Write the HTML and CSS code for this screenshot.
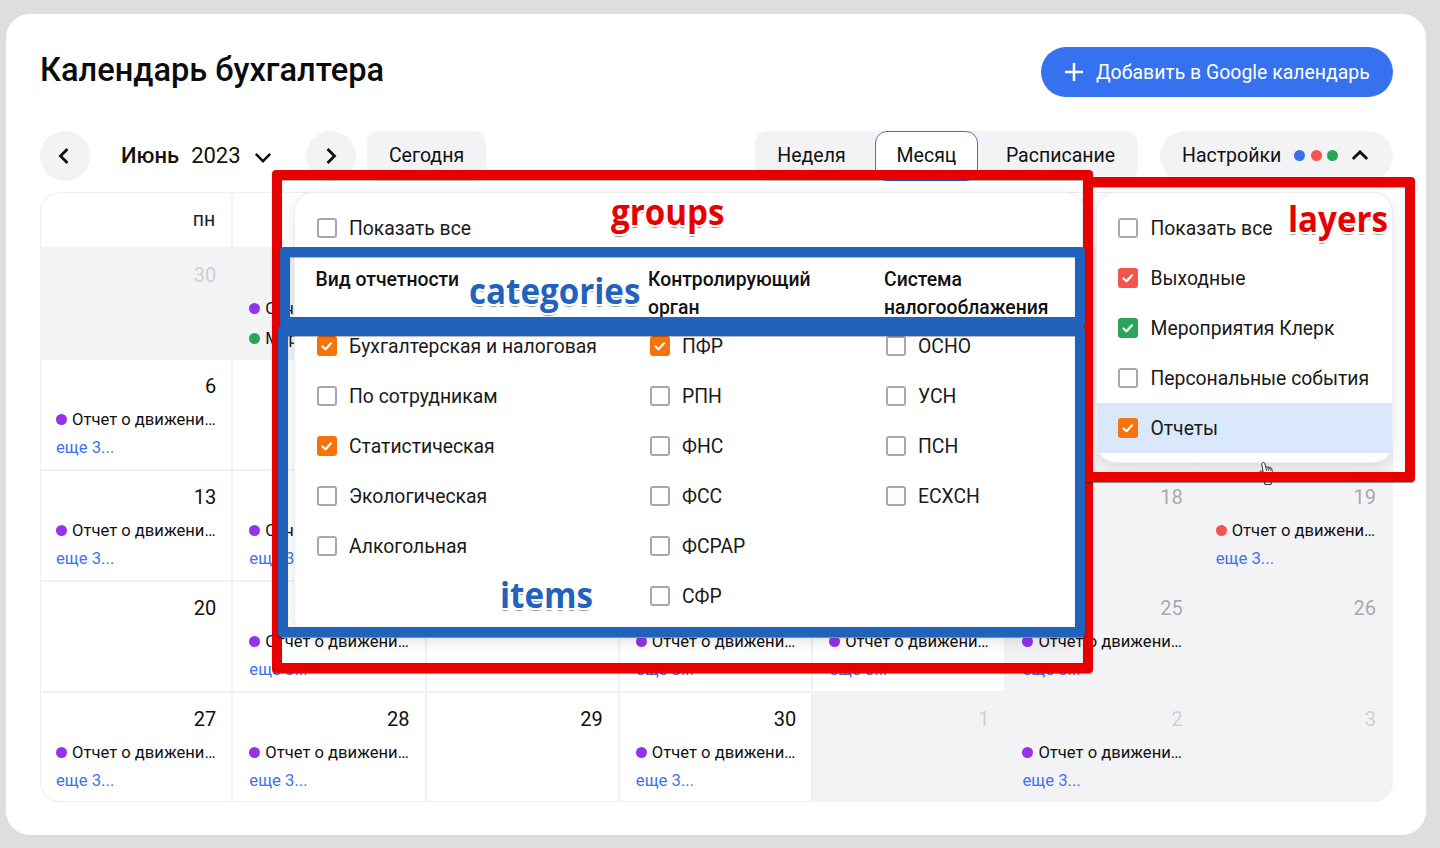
FILE: index.html
```html
<!DOCTYPE html>
<html lang="ru">
<head>
<meta charset="utf-8">
<title>Календарь бухгалтера</title>
<link rel="stylesheet" href="styles.css">
</head>
<body>
<svg class="defs" width="0" height="0" aria-hidden="true"><defs><symbol id="tick" viewBox="0 0 20 20"><path d="M5.500 10.500l3 2.800 5.500-6" fill="none" stroke="#fff" stroke-width="2.200" stroke-linecap="round" stroke-linejoin="round"/></symbol></defs></svg>
<main class="card">
  <header class="top">
    <h1 class="title">Календарь бухгалтера</h1>
    <button class="add"><svg class="plus" viewBox="0 0 20 20"><path d="M10 0v20M0 10h20" fill="none" stroke="#fff" stroke-width="2.800"/></svg><span class="add-text">Добавить в Google календарь</span></button>
  </header>
  <div class="controls">
    <button class="round"><svg class="chev chev-left" viewBox="0 0 14 20"><path d="M10.500 3L3.500 10l7 7" fill="none" stroke="#111" stroke-width="2.800"/></svg></button>
    <div class="month"><b>Июнь</b><span>2023</span><svg class="down" viewBox="0 0 20 12"><path d="M2 2l8 8 8-8" fill="none" stroke="#111" stroke-width="2.800"/></svg></div>
    <button class="round"><svg class="chev" viewBox="0 0 14 20"><path d="M3.500 3l7 7-7 7" fill="none" stroke="#111" stroke-width="2.800"/></svg></button>
    <button class="today">Сегодня</button>
    <div class="tabs"><span class="tab tab-week">Неделя</span><span class="tab tab-active">Месяц</span><span class="tab tab-sched">Расписание</span></div>
    <div class="settings">Настройки<i class="dot blue"></i><i class="dot red"></i><i class="dot green"></i><svg class="up" viewBox="0 0 20 12"><path d="M2 10l8-8 8 8" fill="none" stroke="#111" stroke-width="3.200"/></svg></div>
  </div>

  <div class="calendar-wrap">
    <div class="calendar">
      <div class="head">пн</div><div class="head">вт</div><div class="head">ср</div><div class="head">чт</div><div class="head">пт</div><div class="head">сб</div><div class="head">вс</div>

      <div class="cell out"><div class="num">30</div></div>
      <div class="cell out"><div class="num">31</div><div class="ev"><i class="pt purple"></i><span>Отчет о движении денежных средств</span></div><div class="ev"><i class="pt grn"></i><span>Мероприятие Клерк</span></div></div>
      <div class="cell"><div class="num">1</div></div>
      <div class="cell"><div class="num">2</div></div>
      <div class="cell"><div class="num">3</div></div>
      <div class="cell off"><div class="num">4</div></div>
      <div class="cell off"><div class="num">5</div></div>

      <div class="cell"><div class="num">6</div><div class="ev"><i class="pt purple"></i><span>Отчет о движении денежных средств</span></div><a class="more">еще 3...</a></div>
      <div class="cell"><div class="num">7</div></div>
      <div class="cell"><div class="num">8</div></div>
      <div class="cell"><div class="num">9</div></div>
      <div class="cell"><div class="num">10</div></div>
      <div class="cell off"><div class="num">11</div></div>
      <div class="cell off"><div class="num">12</div></div>

      <div class="cell"><div class="num">13</div><div class="ev"><i class="pt purple"></i><span>Отчет о движении денежных средств</span></div><a class="more">еще 3...</a></div>
      <div class="cell"><div class="num">14</div><div class="ev"><i class="pt purple"></i><span>Отчет о движении денежных средств</span></div><a class="more">еще 3...</a></div>
      <div class="cell"><div class="num">15</div></div>
      <div class="cell"><div class="num">16</div></div>
      <div class="cell"><div class="num">17</div></div>
      <div class="cell off"><div class="num">18</div></div>
      <div class="cell off"><div class="num">19</div><div class="ev"><i class="pt redpt"></i><span>Отчет о движении денежных средств</span></div><a class="more">еще 3...</a></div>

      <div class="cell"><div class="num">20</div></div>
      <div class="cell"><div class="num">21</div><div class="ev"><i class="pt purple"></i><span>Отчет о движении денежных средств</span></div><a class="more">еще 3...</a></div>
      <div class="cell"><div class="num">22</div></div>
      <div class="cell"><div class="num">23</div><div class="ev"><i class="pt purple"></i><span>Отчет о движении денежных средств</span></div><a class="more">еще 3...</a></div>
      <div class="cell"><div class="num">24</div><div class="ev"><i class="pt purple"></i><span>Отчет о движении денежных средств</span></div><a class="more">еще 3...</a></div>
      <div class="cell off"><div class="num">25</div><div class="ev"><i class="pt purple"></i><span>Отчет о движении денежных средств</span></div><a class="more">еще 3...</a></div>
      <div class="cell off"><div class="num">26</div></div>

      <div class="cell"><div class="num">27</div><div class="ev"><i class="pt purple"></i><span>Отчет о движении денежных средств</span></div><a class="more">еще 3...</a></div>
      <div class="cell"><div class="num">28</div><div class="ev"><i class="pt purple"></i><span>Отчет о движении денежных средств</span></div><a class="more">еще 3...</a></div>
      <div class="cell"><div class="num">29</div></div>
      <div class="cell"><div class="num">30</div><div class="ev"><i class="pt purple"></i><span>Отчет о движении денежных средств</span></div><a class="more">еще 3...</a></div>
      <div class="cell out"><div class="num">1</div></div>
      <div class="cell out"><div class="num">2</div><div class="ev"><i class="pt purple"></i><span>Отчет о движении денежных средств</span></div><a class="more">еще 3...</a></div>
      <div class="cell out"><div class="num">3</div></div>
    </div>

    <section class="panel groups">
      <div class="row"><i class="box"></i>Показать все</div>
      <div class="cols">
        <div class="col col-a">
          <h3 class="cat">Вид отчетности</h3>
          <div class="row"><i class="box on-orange"><svg class="tick"><use href="#tick"/></svg></i>Бухгалтерская и налоговая</div>
          <div class="row"><i class="box"></i>По сотрудникам</div>
          <div class="row"><i class="box on-orange"><svg class="tick"><use href="#tick"/></svg></i>Статистическая</div>
          <div class="row"><i class="box"></i>Экологическая</div>
          <div class="row"><i class="box"></i>Алкогольная</div>
        </div>
        <div class="col col-b">
          <h3 class="cat">Контролирующий орган</h3>
          <div class="row"><i class="box on-orange"><svg class="tick"><use href="#tick"/></svg></i>ПФР</div>
          <div class="row"><i class="box"></i>РПН</div>
          <div class="row"><i class="box"></i>ФНС</div>
          <div class="row"><i class="box"></i>ФСС</div>
          <div class="row"><i class="box"></i>ФСРАР</div>
          <div class="row"><i class="box"></i>СФР</div>
        </div>
        <div class="col col-c">
          <h3 class="cat">Система налогооблажения</h3>
          <div class="row"><i class="box"></i>ОСНО</div>
          <div class="row"><i class="box"></i>УСН</div>
          <div class="row"><i class="box"></i>ПСН</div>
          <div class="row"><i class="box"></i>ЕСХСН</div>
        </div>
      </div>
    </section>

    <section class="panel layers">
      <div class="row"><i class="box"></i>Показать все</div>
      <div class="row"><i class="box on-red"><svg class="tick"><use href="#tick"/></svg></i>Выходные</div>
      <div class="row"><i class="box on-green"><svg class="tick"><use href="#tick"/></svg></i>Мероприятия Клерк</div>
      <div class="row"><i class="box"></i>Персональные события</div>
      <div class="row row-hover"><i class="box on-orange"><svg class="tick"><use href="#tick"/></svg></i>Отчеты</div>
    </section>
  </div>

  <svg class="cursor" viewBox="0 0 20 24"><path d="M3.500 1c.8-1.200 2.200-.8 2.500.3l1 3.700c.8-.6 1.800-.4 2.200.4.700-.6 1.800-.3 2.100.5.800-.5 1.800-.1 2 .8l.7 3.300c.4 2-.2 4-1.200 5.500v8H6v-6.500L1 11c-.7-1 .5-2 1.500-1.500L4.500 11 3 3c-.1-.7.100-1.400.500-2zM7 5l1 4M9.200 5.400l.8 3.600M11.300 5.900l.7 3" fill="#fff" stroke="#222" stroke-width="1"/></svg>

  <div class="mark mark-groups"></div>
  <div class="mark mark-layers"></div>
  <div class="mark mark-cats"></div>
  <div class="mark mark-items"></div>
  <span class="label label-red label-groups">groups</span>
  <span class="label label-red label-layers">layers</span>
  <span class="label label-blue label-cats">categories</span>
  <span class="label label-blue label-items">items</span>
</main>
</body>
</html>
```
FILE: styles.css
```css
* { box-sizing: border-box; }
html, body { margin: 0; height: 100%; }
body {
  width: 1440px;
  height: 848px;
  overflow: hidden;
  padding: 14px 14px 13px 6px;
  background: #dedede;
  font-family: Roboto, "Liberation Sans", sans-serif;
  color: #111;
}
.defs { position: absolute; }
.card {
  position: relative;
  height: 821px;
  padding: 33px 33px 0 34px;
  background: #fff;
  border-radius: 24px;
}
.top { display: flex; justify-content: space-between; align-items: flex-start; height: 50px; }
.title { margin: 0; padding-top: 1px; font-size: 32.600px; line-height: 44px; font-weight: 500; color: #0c0c0c; }
button { font: inherit; border: 0; color: inherit; padding: 0; }
.add {
  display: flex; align-items: center; gap: 13px;
  height: 50px; width: 352px; padding-left: 24px;
  border-radius: 25px;
  background: #3671f0; color: #fff; font-size: 19.450px;
}
.add-text { padding-top: 1px; }
.plus { width: 18px; height: 18px; }
.controls { display: flex; align-items: center; height: 50px; margin-top: 34px; font-size: 19.500px; }
.round { width: 50px; height: 50px; border-radius: 50%; background: #f3f3f6; display: flex; align-items: center; justify-content: center; }
.chev { width: 14px; height: 20px; }
.chev-left { margin-right: 2px; }
.month { width: 216px; padding-left: 31px; display: flex; align-items: center; font-size: 22px; padding-bottom: 2px; }
.month b { font-weight: 500; margin-right: 12px; }
.down { width: 18px; height: 11px; margin-left: 13px; margin-top: 5px; }
.today { height: 50px; width: 119px; margin-left: 11px; background: #f3f3f6; border-radius: 12px; padding-bottom: 1px; }
.tabs { display: flex; height: 50px; margin-left: auto; background: #f3f3f6; border-radius: 12px; width: 383px; }
.tab { display: flex; align-items: center; justify-content: center; height: 50px; padding-bottom: 1px; }
.tab-week { width: 120px; padding-right: 7px; }
.tab-active { width: 103px; background: #fff; border: 1px solid #3671f0; border-radius: 12px; }
.tab-sched { width: 160px; padding-left: 5px; }
.settings { display: flex; align-items: center; height: 50px; width: 233px; margin-left: 22px; padding-left: 22px; padding-bottom: 1px; background: #f3f3f6; border-radius: 25px; }
.dot { width: 11px; height: 11px; border-radius: 50%; margin-left: 5.500px; }
.dot.blue { background: #3671f0; margin-left: 13px; }
.dot.red { background: #f2554e; }
.dot.green { background: #2aa55a; }
.up { width: 18px; height: 11px; margin-left: 13px; }

.calendar-wrap { position: relative; margin-top: 11px; }
.calendar {
  display: grid;
  grid-template-columns: repeat(7, 1fr);
  grid-template-rows: 55px repeat(5, 1fr);
  width: 1353px; height: 610px;
  border-radius: 20px;
  overflow: hidden;
  box-shadow: inset 0 0 0 1px #eeeef0;
}
.head { display: flex; align-items: center; justify-content: flex-end; padding: 0 16px 0 0; font-size: 19.500px; color: #222; border-right: 2px solid #f3f3f5; }
.cell { padding: 13px 14px 0 16px; border-top: 2px solid #f1f1f3; border-right: 2px solid #f1f1f3; min-width: 0; }
.num { font-size: 20px; line-height: 26px; text-align: right; margin-right: 1px; }
.out { background: #f3f3f6; }
.out .num { color: #cfcfd2; }
.off { background: #f3f3f6; }
.off .num { color: #a9a9ac; }
.ev { display: flex; align-items: center; gap: 5px; height: 20px; margin-top: 10px; font-size: 16.600px; }
.ev span { flex: 1; min-width: 0; white-space: nowrap; overflow: hidden; text-overflow: ellipsis; }
.pt { flex: none; width: 11px; height: 11px; border-radius: 50%; }
.purple { background: #9333ea; }
.redpt { background: #f2554e; }
.grn { background: #2aa55a; }
.more { display: block; margin-top: 9px; font-size: 16.700px; line-height: 20px; color: #3d74f0; }

.panel {
  position: absolute; top: 0;
  background: #fff;
  border: 1px solid #eeeef0;
  border-radius: 20px;
  box-shadow: 0 4px 16px rgba(0, 0, 0, .1);
}
.row { display: flex; align-items: center; height: 50px; padding-left: 21.500px; font-size: 19.350px; color: #1a1a1a; white-space: nowrap; }
.box { flex: none; position: relative; width: 20px; height: 20px; margin-right: 12.500px; border: 2px solid #a8a8a8; border-radius: 3px; background: #fff; }
.on-orange, .on-red, .on-green { border: 0; }
.on-orange { background: #f5730a; }
.on-red { background: #f2554e; }
.on-green { background: #2aa55a; }
.tick { display: block; width: 20px; height: 20px; }
.groups { left: 254px; width: 791px; height: 446px; padding-top: 10px; }
.cols { display: flex; height: 385px; }
.col-a { width: 333px; }
.col-b { width: 236px; }
.col-c { flex: 1; }
.cat { margin: 0; height: 68px; padding: 13px 20px 0 20.500px; font-size: 19.350px; line-height: 28px; font-weight: 500; color: #111; }
.col-b .cat { padding-left: 20px; }
.col-c .cat { padding-left: 20px; padding-right: 0; }
.layers { left: 1056px; width: 297px; height: 271px; padding-top: 10px; }
.layers .row { padding-left: 21px; }
.row-hover { background: #d9e9fb; }

.cursor { position: absolute; left: 1253px; top: 448px; width: 19px; height: 23px; }

.mark { position: absolute; border-style: solid; border-width: 10px; border-radius: 4px; box-shadow: 0 1px 1px rgba(0, 0, 0, .45), inset 0 1px 1px rgba(0, 0, 0, .3); }
.mark-groups { left: 266px; top: 156px; width: 821px; height: 503px; border-color: #e60000; }
.mark-layers { left: 1077px; top: 163px; width: 332px; height: 305px; border-color: #e60000; }
.mark-cats { left: 274px; top: 233px; width: 805px; height: 80px; border-color: #2162bd; }
.mark-items { left: 272px; top: 312px; width: 807px; height: 311px; border-color: #2162bd; }
.label {
  position: absolute;
  font-family: "Open Sans", "Noto Sans", sans-serif;
  font-weight: 700;
  font-size: 36px;
  line-height: 44px;
  white-space: nowrap;
  transform: scaleX(.92);
  transform-origin: left center;
  text-shadow: 1.500px 0 0 #fff, -1.500px 0 0 #fff, 0 1.500px 0 #fff, 0 -1.500px 0 #fff, 1.500px 1.500px 0 #fff, -1.500px 1.500px 0 #fff, 1.500px -1.500px 0 #fff, -1.500px -1.500px 0 #fff, 0 3px 1px #999;
}
.label-red { color: #e60000; }
.label-blue { color: #2162bd; }
.label-groups { left: 605px; top: 176px; }
.label-layers { left: 1282px; top: 183px; }
.label-cats { left: 463px; top: 255px; }
.label-items { left: 494px; top: 559px; }
```
